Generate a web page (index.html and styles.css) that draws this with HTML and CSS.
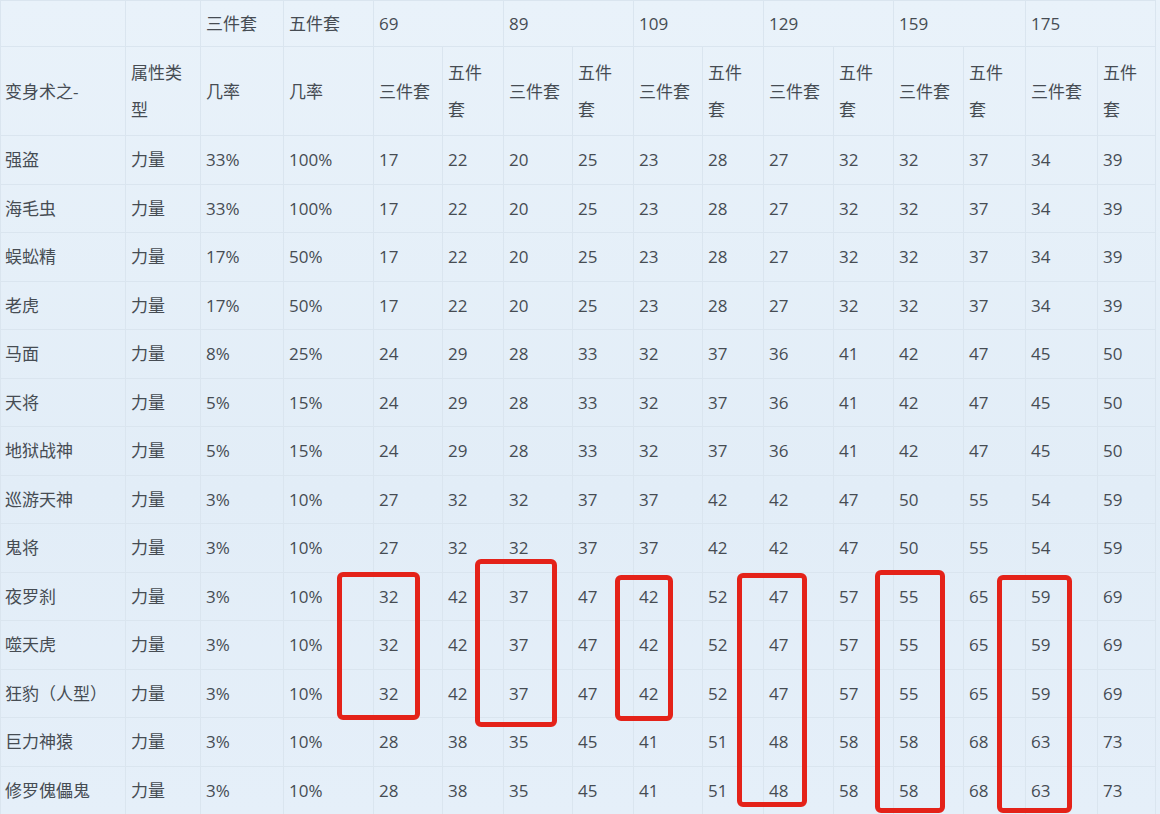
FILE: index.html
```html
<!DOCTYPE html>
<html lang="zh">
<head>
<meta charset="utf-8">
<title>变身术</title>
<link rel="stylesheet" href="styles.css">
</head>
<body>
<div class="sheet">
<table class="grid">
<colgroup>
<col class="w125"><col class="w75"><col class="w83"><col class="w90">
<col class="w69"><col class="w61"><col class="w69"><col class="w61">
<col class="w69"><col class="w61"><col class="w70"><col class="w60">
<col class="w70"><col class="w62"><col class="w72"><col class="w58">
</colgroup>
<thead>
<tr class="h1">
<th></th><th></th><th>三件套</th><th>五件套</th>
<th colspan="2">69</th><th colspan="2">89</th><th colspan="2">109</th>
<th colspan="2">129</th><th colspan="2">159</th><th colspan="2">175</th>
</tr>
<tr class="h2">
<th>变身术之-</th><th>属性类型</th><th>几率</th><th>几率</th>
<th>三件套</th><th>五件套</th><th>三件套</th><th>五件套</th>
<th>三件套</th><th>五件套</th><th>三件套</th><th>五件套</th>
<th>三件套</th><th>五件套</th><th>三件套</th><th>五件套</th>
</tr>
</thead>
<tbody>
<tr><td>强盗</td><td>力量</td><td>33%</td><td>100%</td><td>17</td><td>22</td><td>20</td><td>25</td><td>23</td><td>28</td><td>27</td><td>32</td><td>32</td><td>37</td><td>34</td><td>39</td></tr>
<tr><td>海毛虫</td><td>力量</td><td>33%</td><td>100%</td><td>17</td><td>22</td><td>20</td><td>25</td><td>23</td><td>28</td><td>27</td><td>32</td><td>32</td><td>37</td><td>34</td><td>39</td></tr>
<tr><td>蜈蚣精</td><td>力量</td><td>17%</td><td>50%</td><td>17</td><td>22</td><td>20</td><td>25</td><td>23</td><td>28</td><td>27</td><td>32</td><td>32</td><td>37</td><td>34</td><td>39</td></tr>
<tr><td>老虎</td><td>力量</td><td>17%</td><td>50%</td><td>17</td><td>22</td><td>20</td><td>25</td><td>23</td><td>28</td><td>27</td><td>32</td><td>32</td><td>37</td><td>34</td><td>39</td></tr>
<tr><td>马面</td><td>力量</td><td>8%</td><td>25%</td><td>24</td><td>29</td><td>28</td><td>33</td><td>32</td><td>37</td><td>36</td><td>41</td><td>42</td><td>47</td><td>45</td><td>50</td></tr>
<tr><td>天将</td><td>力量</td><td>5%</td><td>15%</td><td>24</td><td>29</td><td>28</td><td>33</td><td>32</td><td>37</td><td>36</td><td>41</td><td>42</td><td>47</td><td>45</td><td>50</td></tr>
<tr><td>地狱战神</td><td>力量</td><td>5%</td><td>15%</td><td>24</td><td>29</td><td>28</td><td>33</td><td>32</td><td>37</td><td>36</td><td>41</td><td>42</td><td>47</td><td>45</td><td>50</td></tr>
<tr><td>巡游天神</td><td>力量</td><td>3%</td><td>10%</td><td>27</td><td>32</td><td>32</td><td>37</td><td>37</td><td>42</td><td>42</td><td>47</td><td>50</td><td>55</td><td>54</td><td>59</td></tr>
<tr><td>鬼将</td><td>力量</td><td>3%</td><td>10%</td><td>27</td><td>32</td><td>32</td><td>37</td><td>37</td><td>42</td><td>42</td><td>47</td><td>50</td><td>55</td><td>54</td><td>59</td></tr>
<tr><td>夜罗刹</td><td>力量</td><td>3%</td><td>10%</td><td>32</td><td>42</td><td>37</td><td>47</td><td>42</td><td>52</td><td>47</td><td>57</td><td>55</td><td>65</td><td>59</td><td>69</td></tr>
<tr><td>噬天虎</td><td>力量</td><td>3%</td><td>10%</td><td>32</td><td>42</td><td>37</td><td>47</td><td>42</td><td>52</td><td>47</td><td>57</td><td>55</td><td>65</td><td>59</td><td>69</td></tr>
<tr><td>狂豹（人型）</td><td>力量</td><td>3%</td><td>10%</td><td>32</td><td>42</td><td>37</td><td>47</td><td>42</td><td>52</td><td>47</td><td>57</td><td>55</td><td>65</td><td>59</td><td>69</td></tr>
<tr><td>巨力神猿</td><td>力量</td><td>3%</td><td>10%</td><td>28</td><td>38</td><td>35</td><td>45</td><td>41</td><td>51</td><td>48</td><td>58</td><td>58</td><td>68</td><td>63</td><td>73</td></tr>
<tr><td>修罗傀儡鬼</td><td>力量</td><td>3%</td><td>10%</td><td>28</td><td>38</td><td>35</td><td>45</td><td>41</td><td>51</td><td>48</td><td>58</td><td>58</td><td>68</td><td>63</td><td>73</td></tr>
</tbody>
</table>
<div class="mark m1"></div>
<div class="mark m2"></div>
<div class="mark m3"></div>
<div class="mark m4"></div>
<div class="mark m5"></div>
<div class="mark m6"></div>
</div>
</body>
</html>
```
FILE: styles.css
```css
html, body {
  margin: 0;
  padding: 0;
  background: #e4eef8;
}
body {
  width: 1160px;
  height: 814px;
  overflow: hidden;
  font-family: "Open Sans", "Noto Sans CJK SC", sans-serif;
  color: #464c53;
}
.sheet {
  position: relative;
  width: 1160px;
  height: 814px;
  background: linear-gradient(180deg, #e9f2fa 0%, #e2edf7 60%, #e5eff9 100%);
}
.grid {
  border-collapse: collapse;
  table-layout: fixed;
  width: 1155px;
  font-size: 17px;
}
.grid th, .grid td {
  border: 1px solid #dae5ef;
  padding: 0 7px 0 5px;
  text-align: left;
  vertical-align: middle;
  font-weight: normal;
  line-height: 37px;
  overflow: hidden;
}
.grid th:first-child, .grid td:first-child { padding-left: 4px; }
.h1 { height: 46px; }
.h2 { height: 89px; }
tbody tr { height: 48.5px; }
.w125 { width: 125px; }
.w75 { width: 75px; }
.w83 { width: 83px; }
.w90 { width: 90px; }
.w69 { width: 69px; }
.w61 { width: 61px; }
.w70 { width: 70px; }
.w60 { width: 60px; }
.w62 { width: 62px; }
.w72 { width: 72px; }
.w58 { width: 58px; }
.mark {
  position: absolute;
  box-sizing: border-box;
  border: 5px solid #e42219;
  border-radius: 6px;
}
.m1 { left: 337px; top: 572px; width: 83px; height: 148px; }
.m2 { left: 475px; top: 559px; width: 82px; height: 168px; }
.m3 { left: 615px; top: 575px; width: 58px; height: 146px; }
.m4 { left: 737px; top: 573px; width: 70px; height: 234px; }
.m5 { left: 875px; top: 570px; width: 70px; height: 243px; }
.m6 { left: 997px; top: 575px; width: 75px; height: 238px; }
```
